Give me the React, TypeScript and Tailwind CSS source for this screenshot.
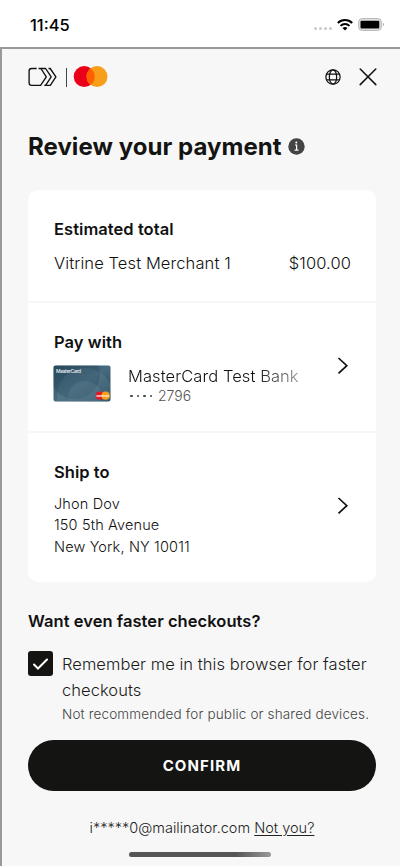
import type { ReactNode } from "react";

function StatusBar() {
  return (
    <div className="flex h-[47px] items-center justify-between bg-white pt-[3px] pl-[30px] pr-[15px]">
      <span className="text-[16.5px] font-medium leading-5 text-black">11:45</span>
      <div className="flex items-center">
        <div className="mt-[7px] mr-[5px] flex gap-[1.500px]">
          <i className="size-[3.500px] rounded-full bg-[#c9c9c9]" />
          <i className="size-[3.500px] rounded-full bg-[#c9c9c9]" />
          <i className="size-[3.500px] rounded-full bg-[#c9c9c9]" />
          <i className="size-[3.500px] rounded-full bg-[#c9c9c9]" />
        </div>
        <svg className="-mt-px" width="16" height="12" viewBox="0 0 16 12" fill="none" stroke="#000" strokeWidth="2">
          <path d="M.8 4a10.300 10.300 0 0 1 14.400 0M3.500 6.900a6.500 6.500 0 0 1 9 0" />
          <path d="M8 11.600 5.500 9.100a3.600 3.600 0 0 1 5 0z" fill="#000" stroke="none" />
        </svg>
        <svg className="-mt-px ml-[5px]" width="27" height="13" viewBox="0 0 27 13" fill="none">
          <rect x=".7" y=".6" width="22.600" height="11.800" rx="3.400" fill="#e4e4e4" stroke="#b5b5b5" />
          <rect x="2.500" y="2.800" width="18.800" height="7.600" rx="1" fill="#000" />
          <path d="M24.800 4.700c1.500.6 1.500 3 0 3.600z" fill="#aaa" />
        </svg>
      </div>
    </div>
  );
}

function Header() {
  return (
    <div className="flex h-14 items-center justify-between pl-[26px] pr-[22px]">
      <div className="flex items-center">
        <svg width="30" height="20" viewBox="0 0 30 20" fill="none" stroke="#111" strokeWidth="1.350" strokeLinejoin="round">
          <path d="M8.700 1.500H3.700A2.600 2.600 0 0 0 1.100 4.100V15.700A2.600 2.600 0 0 0 3.700 18.300H12.600L18.300 9.900L12.900 1.500" />
          <path d="M10.600 1.500H17.600L23.200 9.900L17.600 18.300" />
          <path d="M20.500 1.500H22.200L27.900 9.900L22.300 18.300H16.300" />
        </svg>
        <i className="mr-[6px] ml-[8px] h-[19px] w-px bg-[#444]" />
        <svg width="35" height="22" viewBox="0 0 35 22">
          <circle cx="11.200" cy="10.600" r="10.500" fill="#eb001b" />
          <circle cx="24" cy="10.600" r="10.500" fill="#f79e1b" />
          <path d="M17.600 2.250a10.500 10.500 0 0 1 0 16.700a10.500 10.500 0 0 1 0-16.700z" fill="#ff5f00" />
        </svg>
      </div>
      <div className="flex items-center gap-[17px]">
        <svg className="-mt-px mr-px" width="16" height="16" viewBox="0 0 17 17" fill="none" stroke="#111" strokeWidth="1.300">
          <circle cx="8.500" cy="8.500" r="7.600" />
          <ellipse cx="8.500" cy="8.500" rx="3.900" ry="7.600" />
          <path d="M1.700 5.500h13.600M1.700 11.500h13.600" />
        </svg>
        <svg className="mr-px" width="18" height="18" viewBox="0 0 18 18" fill="none" stroke="#111" strokeWidth="1.500" strokeLinecap="round">
          <path d="M1.200 1l15.600 15.600M16.800 1L1.200 16.600" />
        </svg>
      </div>
    </div>
  );
}

function Chevron() {
  return (
    <svg width="12" height="18" viewBox="0 0 12 18" fill="none" stroke="#111" strokeWidth="1.700">
      <path d="M1.500 1l8.300 7.700l-8.300 7.700" />
    </svg>
  );
}

function BankCard() {
  return (
    <svg width="58" height="37" viewBox="0 0 58 37">
      <defs>
        <linearGradient id="card" x1="0" y1="0" x2="1" y2="1">
          <stop offset="0" stopColor="#2c4d62" />
          <stop offset=".5" stopColor="#476a7e" />
          <stop offset="1" stopColor="#264a5e" />
        </linearGradient>
        <clipPath id="edge"><rect x=".500" y=".500" width="57" height="36" rx="2" /></clipPath>
      </defs>
      <g clipPath="url(#edge)">
        <rect width="58" height="37" fill="url(#card)" />
        <circle cx="32" cy="31" r="28" fill="#88a5b4" opacity=".16" />
        <circle cx="22" cy="9" r="25" fill="#16384e" opacity=".23" />
        <circle cx="32" cy="33" r="17" fill="#7896a6" opacity=".2" />
      </g>
      <text x="3" y="7.500" fontSize="5" fontWeight="500" textLength="25" fill="#f2f5f7">MasterCard</text>
      <circle cx="46.800" cy="30.700" r="4.100" fill="#e51b24" />
      <circle cx="52.600" cy="30.700" r="4.100" fill="#f5a01c" />
      <text x="43.500" y="31.700" fontSize="2.400" fontWeight="600" textLength="12.500" fill="#fff">MasterCard</text>
    </svg>
  );
}

function Heading({ children }: { children: ReactNode }) {
  return <h2 className="text-[16.5px] font-[560] leading-5 tracking-[0.050px] text-[#111]">{children}</h2>;
}

export default function App() {
  return (
    <div className="flex h-[866px] w-[400px] flex-col overflow-hidden bg-white font-['Inter','Liberation_Sans',sans-serif] text-[#1a1a1a]">
      <StatusBar />
      <main className="flex flex-1 flex-col border-t-2 border-l-2 border-[#999] bg-[#f7f7f7]">
        <Header />
        <div className="flex h-[85px] items-center gap-[6px] pb-[2px] pl-[26px]">
          <h1 className="text-[24px] font-bold leading-8 tracking-[0.050px] whitespace-nowrap text-[#141413]">Review your payment</h1>
          <svg width="17" height="17" viewBox="0 0 17 17">
            <circle cx="8.500" cy="8.500" r="8.200" fill="#444" />
            <path d="M7 7h1.600v5M6.600 12.100h3.900" fill="none" stroke="#fff" strokeWidth="1.200" />
            <circle cx="8.300" cy="4.500" r="1" fill="#fff" />
          </svg>
        </div>
        <section className="ml-[26px] h-[392px] w-[348px] rounded-[10px] bg-white text-[#111]">
          <div className="h-[113px] border-b-2 border-[#f7f7f7] px-[26px] pt-[29px]">
            <Heading>Estimated total</Heading>
            <div className="-mr-px mt-[13px] flex justify-between text-[16.5px] font-[330] leading-[22px]">
              <span className="tracking-[0.100px]">Vitrine Test Merchant 1</span>
              <span className="tracking-[0.100px]">$100.00</span>
            </div>
          </div>
          <div className="flex h-[130px] border-b-2 border-[#f7f7f7] pt-[29px] pr-[27px] pl-[25px]">
            <div className="flex-1">
              <div className="pl-px"><Heading>Pay with</Heading></div>
              <div className="mt-[13px] flex gap-[17px]">
                <BankCard />
                <div className="flex flex-col pt-px">
                  <span className="w-[178px] bg-linear-to-r from-[#111] from-70% to-[#888] to-94% bg-clip-text text-[16.5px] font-[330] leading-[20px] tracking-[0.080px] whitespace-nowrap text-transparent">MasterCard Test Bank</span>
                  <span className="flex items-center text-[14px] font-[330] leading-5 text-[#555]">
                    <span className="mr-[6px] flex gap-[4px] pl-[2px]">
                      <i className="size-[2.500px] rounded-full bg-[#444]" />
                      <i className="size-[2.500px] rounded-full bg-[#444]" />
                      <i className="size-[2.500px] rounded-full bg-[#444]" />
                      <i className="size-[2.500px] rounded-full bg-[#444]" />
                    </span>
                    2796
                  </span>
                </div>
              </div>
            </div>
            <div className="pt-[25px]"><Chevron /></div>
          </div>
          <div className="flex h-[149px] justify-between pt-[29px] pr-[27px] pl-[26px]">
            <div>
              <Heading>Ship to</Heading>
              <address className="mt-[11px] text-[14.5px] font-[330] leading-[21.300px] tracking-[0.150px] not-italic">
                Jhon Dov<br />150 5th Avenue<br />New York, NY 10011
              </address>
            </div>
            <div className="pt-[35px]"><Chevron /></div>
          </div>
        </section>
        <div className="mt-[29px] ml-[26px]"><Heading>Want even faster checkouts?</Heading></div>
        <label className="mt-[20px] ml-[26px] flex gap-[9px]">
          <span className="flex size-[25px] items-center justify-center rounded-[3px] bg-[#141413]">
            <svg width="15" height="12" viewBox="0 0 15 12" fill="none" stroke="#fff" strokeWidth="2" strokeLinecap="round">
              <path d="M1 6.500l4 4L14 1.500" />
            </svg>
          </span>
          <span className="text-[16.5px] font-[330] leading-[26px] tracking-[0.050px] whitespace-nowrap">
            Remember me in this browser for faster<br />checkouts
            <small className="block text-[13.5px] leading-[22px] tracking-[0.160px] text-[#444]">Not recommended for public or shared devices.</small>
          </span>
        </label>
        <button className="mt-[15px] ml-[26px] flex h-[51px] w-[348px] items-center justify-center rounded-full bg-[#141413] pt-px text-[15px] font-[650] tracking-[1.100px] text-white">CONFIRM</button>
        <p className="mt-[27px] ml-[26px] w-[348px] text-center text-[14.5px] font-[330] leading-5 whitespace-nowrap text-[#222]">
          i*****0@mailinator.com <a className="underline underline-offset-2">Not you?</a>
        </p>
        <div className="mt-[14px] ml-[127px] h-[5px] w-[142px] rounded-full bg-linear-to-r from-[#555] from-75% to-[#999]" />
      </main>
    </div>
  );
}
